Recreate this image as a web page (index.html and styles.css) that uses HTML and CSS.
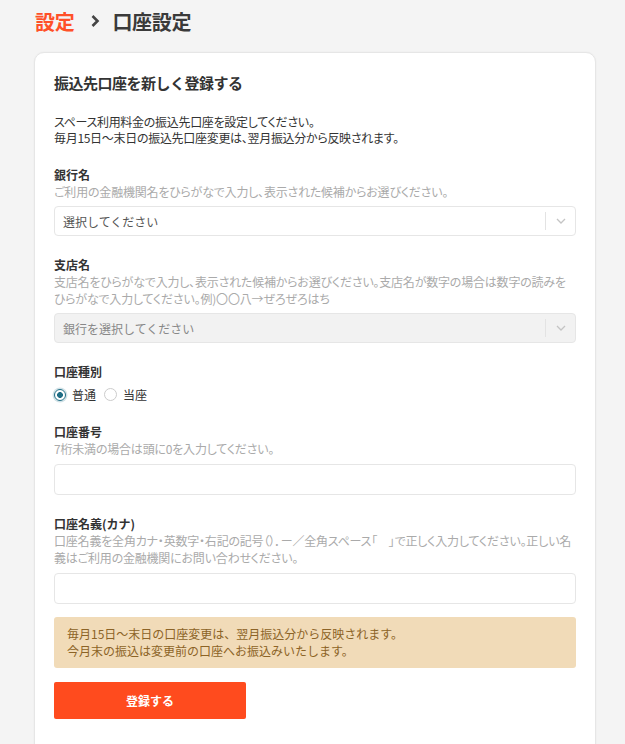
FILE: index.html
```html
<html>
<head>
  <meta charset="UTF-8"/>
  <title>口座設定</title>
  <link rel="stylesheet" href="styles.css">
</head>
<body>
<div class="crumbs">
  <span class="crumb-link">設定</span>
  <svg class="crumb-sep" width="10" height="14" viewBox="0 0 10 14"><path d="M2.5 2 L7.5 7 L2.5 12" fill="none" stroke="#444" stroke-width="2.6"/></svg>
  <span class="crumb-here">口座設定</span>
</div>

<div class="card">
  <h2 class="card-title">振込先口座を新しく登録する</h2>
  <p class="lead">スペース利用料金の振込先口座を設定してください。<br>毎月15日〜末日の振込先口座変更は、翌月振込分から反映されます。</p>

  <div class="field">
    <div class="label">銀行名</div>
    <div class="hint">ご利用の金融機関名をひらがなで入力し、表示された候補からお選びください。</div>
    <div class="select">
      <span class="select-text">選択してください</span>
      <span class="select-arrow"><svg width="10" height="6" viewBox="0 0 10 6"><path d="M1 1 L5 5 L9 1" fill="none" stroke="#c4c4c4" stroke-width="1.3"/></svg></span>
    </div>
  </div>

  <div class="field">
    <div class="label">支店名</div>
    <div class="hint">支店名をひらがなで入力し、表示された候補からお選びください。支店名が数字の場合は数字の読みをひらがなで入力してください。例)〇〇八→ぜろぜろはち</div>
    <div class="select disabled">
      <span class="select-text">銀行を選択してください</span>
      <span class="select-arrow"><svg width="10" height="6" viewBox="0 0 10 6"><path d="M1 1 L5 5 L9 1" fill="none" stroke="#c4c4c4" stroke-width="1.3"/></svg></span>
    </div>
  </div>

  <div class="field">
    <div class="label">口座種別</div>
    <div class="radios">
      <label class="radio"><span class="dot on"></span>普通</label>
      <label class="radio"><span class="dot"></span>当座</label>
    </div>
  </div>

  <div class="field">
    <div class="label">口座番号</div>
    <div class="hint">7桁未満の場合は頭に0を入力してください。</div>
    <div class="input"></div>
  </div>

  <div class="field">
    <div class="label">口座名義(カナ)</div>
    <div class="hint">口座名義を全角カナ・英数字・右記の記号（）．ー／全角スペース「　」で正しく入力してください。正しい名義はご利用の金融機関にお問い合わせください。</div>
    <div class="input"></div>
  </div>

  <div class="notice">毎月15日〜末日の口座変更は、翌月振込分から反映されます。<br>今月末の振込は変更前の口座へお振込みいたします。</div>

  <button class="submit">登録する</button>
</div>
</body>
</html>
```

FILE: styles.css
```css
body {margin: 0; background: #f4f4f4; font-family: "Noto Sans CJK JP", "Noto Sans", sans-serif; color: #333}

.crumbs {display: flex; align-items: center; height: 42px; padding-left: 35px; font-size: 20px; font-weight: bold; letter-spacing: -0.3px}
.crumb-link {color: #ff5028}
.crumb-sep {margin: 0 12px 0 16px}
.crumb-here {color: #3a3a3a}

.card {margin: 10px 0 0 34px; width: 522px; padding: 20px 19px 40px 19px; background: #fff; border: 1px solid #e6e6e6; border-radius: 10px; box-shadow: 0 0 2px rgba(0,0,0,0.05)}
.card-title {margin: 0; font-size: 15px; line-height: 20px; font-weight: bold; color: #333; letter-spacing: -0.5px}
.lead {margin: 21px 0 0 0; font-size: 12px; line-height: 16px; font-feature-settings: "palt"; letter-spacing: -0.3px}

.field {margin-top: 21px}
.label {font-size: 12px; line-height: 16px; font-weight: bold}
.hint {font-size: 12px; line-height: 17px; color: #aaa; font-feature-settings: "palt"; letter-spacing: -0.2px}

.select {display: flex; align-items: center; height: 28px; margin-top: 6px; border: 1px solid #e6e6e6; border-radius: 4px; font-size: 12px; color: #555}
.select.disabled {background: #f2f2f2; color: #888}
.select-text {flex: 1; padding-left: 8px}
.select-arrow {display: flex; align-items: center; justify-content: center; width: 29px; height: 18px; border-left: 1px solid #e3e3e3}

.radios {display: flex; gap: 8px; margin-top: 6px; font-size: 12px}
.radio {display: flex; align-items: center; gap: 6px}
.dot {width: 11px; height: 11px; border: 1px solid #ccc; border-radius: 50%; background: #fff}
.dot.on {width: 10px; height: 10px; border: 1.5px solid #1f6d85; background: radial-gradient(circle, #1f6d85 0 2.6px, #fff 3.2px); box-shadow: 0 0 0 1.5px rgba(31,109,133,0.2)}

.input {height: 29px; margin-top: 7px; border: 1px solid #e6e6e6; border-radius: 4px}

.notice {margin-top: 13px; padding: 8px 13px 9px 13px; background: #f1dbb8; border-radius: 3px; font-size: 12px; line-height: 17px; color: #8c6326}

.submit {display: block; margin-top: 14px; width: 192px; height: 37px; border: none; border-radius: 2px; background: #ff4b1e; color: #fff; font-family: inherit; font-size: 12px; font-weight: bold}
```
